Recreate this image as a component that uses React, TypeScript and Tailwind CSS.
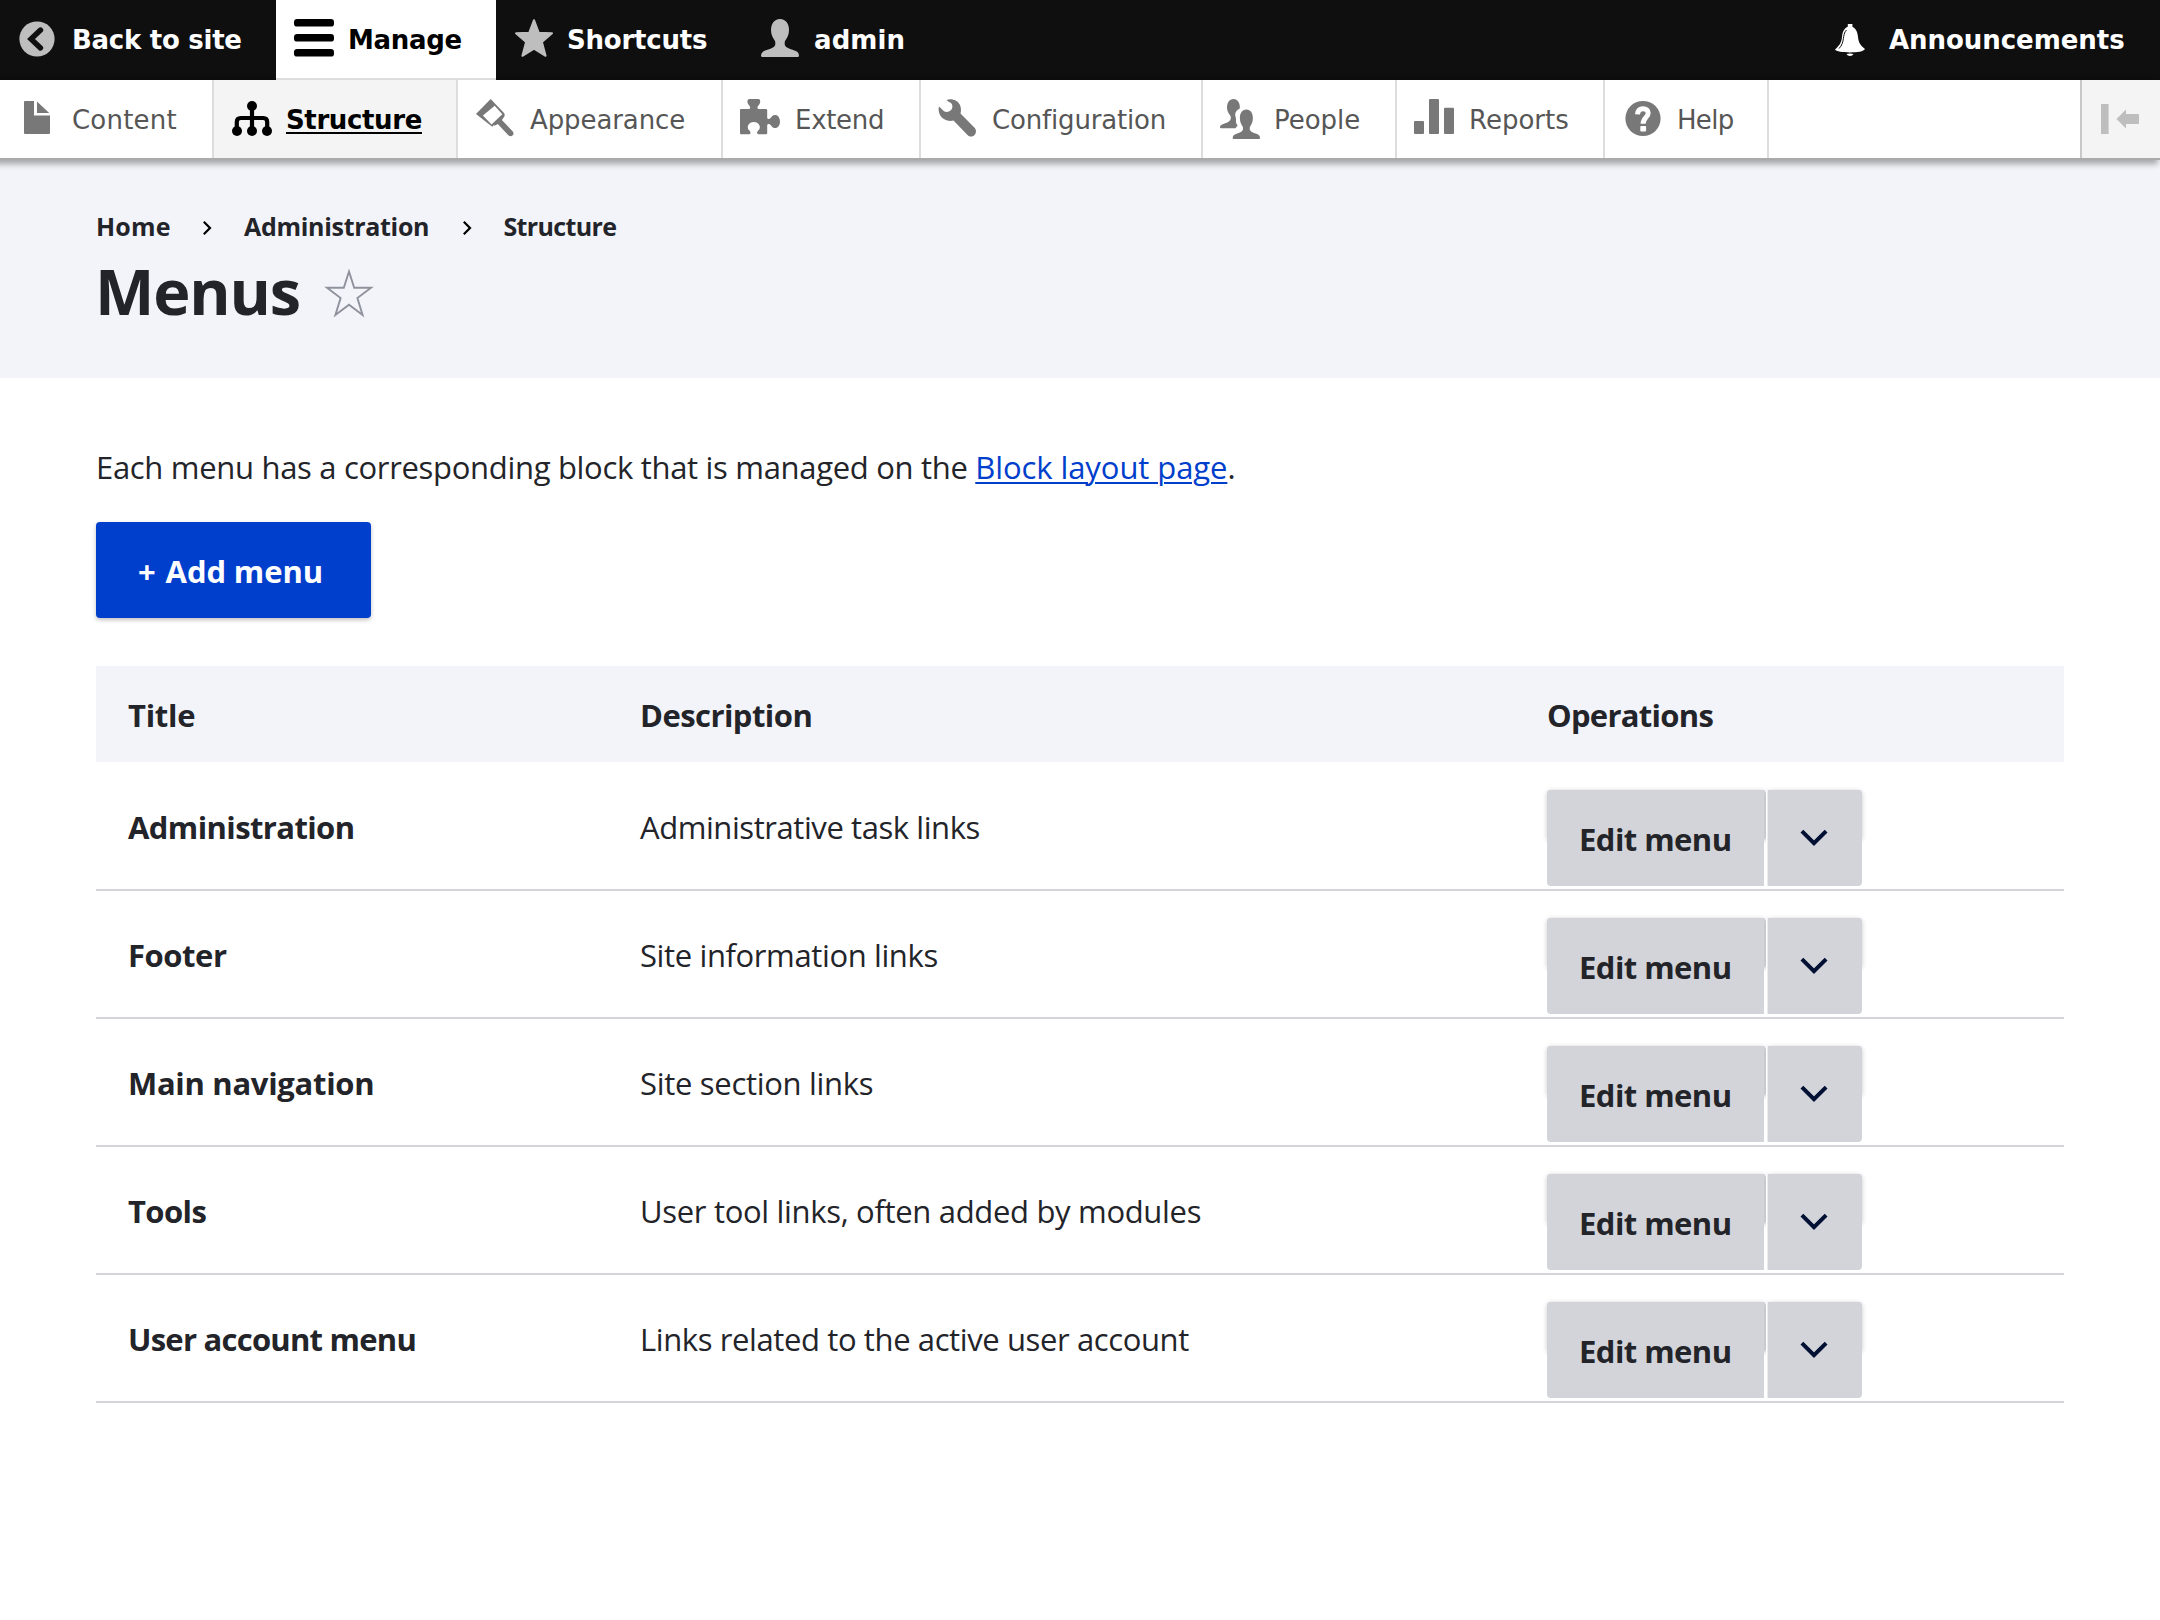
import type { ReactNode } from "react";

const PERSON =
  "M19 0C13 0 10 5 10 11C10 16 12 19 14 22C15 26 14 28 10 29.5C5 31.5 0 32 0 36.5Q0 38 1.5 38H36.5Q38 38 38 36.5C38 32 33 31.5 28 29.5C24 28 23 26 24 22C26 19 28 16 28 11C28 5 25 0 19 0Z";

function BackIcon() {
  return (
    <svg className="h-10 w-10" viewBox="0 0 40 40" fill="none">
      <circle cx="20" cy="20" r="17.6" fill="#bebebe" />
      <path d="M23.5 11L14 20L23.5 29" stroke="#0f0f0f" strokeWidth="5.4" strokeLinecap="round" strokeLinejoin="miter" />
    </svg>
  );
}

function BarsIcon() {
  return (
    <svg className="h-10 w-10" viewBox="-1 0 40 40" fill="#000">
      <rect y="0" width="40" height="7.6" rx="3.2" />
      <rect y="15" width="40" height="7.6" rx="3.2" />
      <rect y="30" width="40" height="7.6" rx="3.2" />
    </svg>
  );
}

function StarIcon() {
  return (
    <svg className="h-10 w-10" viewBox="-1 0 40 40" fill="#bebebe" stroke="#bebebe" strokeWidth="2" strokeLinejoin="round">
      <path d="M20 1.2L24.8 13.8L38 14.3L27.9 23L31.6 36.8L20 29.6L8.4 36.8L12.1 23L2 14.3L15.2 13.8Z" />
    </svg>
  );
}

function UserIcon() {
  return (
    <svg className="h-10 w-10" viewBox="-2 0 40 40" fill="#bebebe">
      <path d={PERSON} />
    </svg>
  );
}

function BellIcon() {
  return (
    <svg className="h-8 w-[30px]" viewBox="0 0 30 32" fill="#fff">
      <rect x="12.8" y="0" width="4.6" height="4" />
      <path d="M15 2.3C20 2.8 22.5 7 23 13C23.5 18 25 21 30 25C29 27.5 22 28.4 15 28.4C8 28.4 1 27.5 0 25.5C5 21 6.5 18 7 13C7.5 7 10 2.8 15 2.3Z" />
      <path d="M11.5 30Q15 29.2 18.5 30Q17.5 32 15 32Q12.5 32 11.5 30Z" />
      <path d="M11.5 6C8 9.5 8.9 15.5 7.2 19.5Q6.2 22.5 4 24.5" fill="none" stroke="#0f0f0f" strokeWidth="1" />
    </svg>
  );
}

function FileIcon() {
  return (
    <svg className="h-10 w-10" viewBox="-7 -2 40 40" fill="#787878">
      <path d="M1 0H10V14.5H26V32Q26 33 25 33H1Q0 33 0 32V1Q0 0 1 0Z" />
      <path d="M13 0.5L25.2 12H13Z" />
    </svg>
  );
}

function StructureIcon() {
  return (
    <svg className="h-10 w-10 overflow-visible" viewBox="-1 -2 40 40" fill="#000">
      <path d="M20 5V30M4.8 30V21Q4.8 17 8.8 17H31.2Q35.2 17 35.2 21V30" fill="none" stroke="#000" strokeWidth="4.2" />
      <circle cx="20" cy="5" r="5" />
      <circle cx="5" cy="30" r="5" />
      <circle cx="20" cy="30" r="5" />
      <circle cx="35" cy="30" r="5" />
    </svg>
  );
}

function BrushIcon() {
  return (
    <svg className="h-10 w-10" viewBox="-1 0 40 40" fill="#787878">
      <path
        fillRule="evenodd"
        d="M14.7 0L28 14Q29.3 16 28.2 17.8L25.9 21L36.8 32.4Q38.2 34.4 36.8 36.3Q34.8 38 32.6 36.6L21.8 25Q19.5 27 17.5 26.3L16.2 27.7L0 15ZM18.7 6.8L6.9 16.6L15.5 25.6L26.3 15.2Z"
      />
    </svg>
  );
}

function PuzzleIcon() {
  return (
    <svg className="h-10 w-10" viewBox="0 0 40 40" fill="#787878">
      <path d="M1 10H9.5C10.6 9 10.4 7.6 9 6.2C7.6 4.8 6.9 2.6 7.8 .9Q8.3 0 9.4 0H18.4Q19.4 0 19.9 .9C20.6 2.6 20 4.8 18.6 6.2C17.2 7.6 17 9 18.2 10H26Q27.2 10 27.2 11V19.3C28.4 20.6 30 20 31.2 18.2C32.4 16.4 34.2 15.6 36 16C38.4 16.6 40 19.2 40 22.4C40 25.8 38.4 28.4 36 29C34.2 29.4 32.4 28.6 31.2 26.8C30 25 28.4 24.4 27.2 25.8V34Q27.2 35.2 26 35.2H18.2C16.6 34.6 16.8 33 18 31.8C19.6 30.4 20.2 28.6 19.6 26.8C19 24.4 16.6 23 13.8 23C11 23 8.6 24.4 8 26.8C7.4 28.6 8 30.4 9.6 31.8C10.8 33 11 34.6 9.4 35.2H1Q0 35.2 0 34V11Q0 10 1 10Z" />
    </svg>
  );
}

function WrenchIcon() {
  return (
    <svg className="h-10 w-10" viewBox="-0.5 0 40 40" fill="#787878">
      <path d="M8 .9C13 -1 19 1 21.5 6C22.7 9 22.7 12 22 14.5L36.3 29C38 31 37.8 34 36 36C34 38 31 38 29 36L15 21.5C10 23 4 20.5 1.5 16C0 13 -.3 10 .5 7.5L5.5 12.3C8 13.5 11 13 13 10.5C14.5 8 14 5.5 12.5 4Q10 3 8 .9Z" />
    </svg>
  );
}

function PeopleIcon() {
  return (
    <svg className="h-10 w-10" viewBox="0 0 40 40" fill="#787878">
      <path d="M13.5 0C9.2 0 7 4 7 8.5C7 12 8.6 14.5 10.4 16.8C11.4 19.6 10.6 22 7.4 23.4C3.4 25 0 25.4 0 28.2Q0 29.3 1 29.3H15.4L17.6 26.6C16.4 25 15.8 23.8 16 21.6C16.4 19 15 17.4 15.2 15C15.6 12 17.4 10.6 19.8 9.4C20.2 4.4 17.8 0 13.5 0Z" />
      <path d={PERSON} transform="translate(12.7 10.6) scale(.72 .775)" />
    </svg>
  );
}

function ReportsIcon() {
  return (
    <svg className="h-10 w-10" viewBox="0 0 40 40" fill="#787878">
      <rect x="0" y="22" width="10" height="13" rx="1" />
      <rect x="15" y="0" width="10" height="35" rx="1" />
      <rect x="30" y="8.7" width="10" height="26.3" rx="1" />
    </svg>
  );
}

function HelpIcon() {
  return (
    <svg className="h-10 w-10" viewBox="-3.5 -2 40 40" fill="none">
      <circle cx="17.5" cy="17.5" r="17.6" fill="#787878" />
      <path d="M12 13.4C12.3 9.8 14.4 7.7 17.6 7.7C20.8 7.7 22.7 9.4 22.7 12C22.7 16.4 17.6 16.6 17.6 22.8" stroke="#fff" strokeWidth="5" />
      <rect x="14.8" y="25" width="5.8" height="5.6" rx="1" fill="#fff" />
    </svg>
  );
}

type TabProps = { icon: ReactNode; label: string; box: string; text: string };

function Tab({ icon, label, box, text }: TabProps) {
  return (
    <a className={`flex h-20 shrink-0 items-center ${box}`}>
      <span className="flex h-20 w-[72px] shrink-0 items-start pt-[19px] pl-[17px] [&>svg]:overflow-visible">{icon}</span>
      <span className={`whitespace-nowrap ${text}`}>{label}</span>
    </a>
  );
}

function TrayItem({ icon, label, box, text }: TabProps) {
  return (
    <li className={`flex h-[78px] shrink-0 items-center border-r-2 border-[#ddd] ${box}`}>
      <span className="flex h-[78px] w-[72px] shrink-0 items-start pt-[19px] pl-[17px]">{icon}</span>
      <span className={`pt-[2px] whitespace-nowrap ${text}`}>{label}</span>
    </li>
  );
}

const tray: TabProps[] = [
  { icon: <FileIcon />, label: "Content", box: "w-[214px]", text: "tracking-[0.2px]" },
  {
    icon: <StructureIcon />,
    label: "Structure",
    box: "w-[244px] bg-[#f4f4f4]",
    text: "font-bold text-black underline decoration-2 underline-offset-[3px] tracking-[-0.37px]",
  },
  { icon: <BrushIcon />, label: "Appearance", box: "w-[265px]", text: "tracking-[-0.1px]" },
  { icon: <PuzzleIcon />, label: "Extend", box: "w-[198px]", text: "tracking-[-0.3px]" },
  { icon: <WrenchIcon />, label: "Configuration", box: "w-[282px]", text: "-ml-px tracking-[-0.17px]" },
  { icon: <PeopleIcon />, label: "People", box: "w-[194px]", text: "-ml-px tracking-[-0.05px]" },
  { icon: <ReportsIcon />, label: "Reports", box: "w-[208px]", text: "" },
  { icon: <HelpIcon />, label: "Help", box: "w-[164px]", text: "tracking-[-0.7px]" },
];

const menus = [
  { title: "Administration", ts: "tracking-[-0.6px]", description: "Administrative task links", ds: "tracking-[-0.43px]" },
  { title: "Footer", ts: "tracking-[-0.45px]", description: "Site information links", ds: "tracking-[-0.38px]" },
  { title: "Main navigation", ts: "tracking-[-0.3px]", description: "Site section links", ds: "tracking-[-0.3px]" },
  { title: "Tools", ts: "tracking-[-0.6px]", description: "User tool links, often added by modules", ds: "tracking-[-0.32px]" },
  { title: "User account menu", ts: "tracking-[-0.75px]", description: "Links related to the active user account", ds: "tracking-[-0.39px]" },
];

function Crumb() {
  return (
    <svg className="mt-[3px] h-3.5 w-2.5 shrink-0" viewBox="0 0 10 14" fill="none" stroke="#000" strokeWidth="2.2">
      <path d="M1.8 .8L8 7L1.8 13.2" />
    </svg>
  );
}

function Operations() {
  return (
    <div className="relative mt-[27px] flex h-24 w-[315px] gap-1">
      <div className="absolute top-0 left-0 h-[50px] w-[219px] rounded-[4px] bg-[#d3d4d9] shadow-[0_1px_5px_rgba(0,0,0,0.22)]" />
      <div className="absolute top-0 right-0 h-[50px] w-[95px] rounded-[4px] bg-[#d3d4d9] shadow-[0_1px_5px_rgba(0,0,0,0.22)]" />
      <div className="absolute top-0 left-[219px] h-24 w-[1.5px] bg-white" />
      <div className="absolute top-0 right-[94px] h-24 w-px bg-[#ececef]" />
      <button className="relative h-24 w-[217px] rounded-l-[4px] bg-[#d3d4d9] pt-[2px] pl-8 text-left font-bold tracking-[-0.55px]">
        Edit menu
      </button>
      <button className="relative flex h-24 w-[94px] items-center justify-center rounded-r-[4px] bg-[#d3d4d9] pr-[2px]">
        <svg className="h-5 w-7" viewBox="0 0 28 20" fill="none" stroke="#000f33" strokeWidth="4">
          <path d="M1.9 3.2L14 15.2L26.1 3.2" />
        </svg>
      </button>
    </div>
  );
}

export default function App() {
  return (
    <div className="h-[1620px] w-[2160px] overflow-hidden bg-white font-['Open_Sans','Noto_Sans',sans-serif] text-[31px] leading-[48px] text-[#232429]">
      <div className="relative z-10 font-['DejaVu_Sans',sans-serif] text-[26px] leading-8">
        <nav className="flex h-20 bg-[#0f0f0f] font-bold text-white">
          <Tab icon={<BackIcon />} label="Back to site" box="w-[276px]" text="tracking-[-0.27px]" />
          <Tab icon={<BarsIcon />} label="Manage" box="w-[220px] bg-white text-black shadow-[inset_0_-2px_0_#ddd]" text="tracking-[-0.33px]" />
          <Tab icon={<StarIcon />} label="Shortcuts" box="w-[246px]" text="-ml-px tracking-[-0.22px]" />
          <Tab icon={<UserIcon />} label="admin" box="w-[200px]" text="tracking-[0.1px]" />
          <a className="ml-auto flex h-20 w-[325px] items-center">
            <BellIcon />
            <span className="ml-6 tracking-[-0.05px]">Announcements</span>
          </a>
        </nav>
        <div className="flex h-20 justify-between border-b-2 border-[#aaa] bg-white text-[#565656] shadow-[-4px_2px_6px_2px_rgba(0,0,0,0.33)]">
          <ul className="flex">
            {tray.map((item) => (
              <TrayItem key={item.label} {...item} />
            ))}
          </ul>
          <button className="flex h-[78px] w-20 items-center border-l-2 border-[#c8c8c8] bg-[#f4f4f4] pl-[19px]">
            <svg className="h-[30px] w-[38px]" viewBox="0 0 38 30" fill="#bebebe">
              <rect width="7.6" height="30" />
              <path d="M15.5 15L25 5.6V10H37Q38 10 38 11V19Q38 20 37 20H25V24.4Z" />
            </svg>
          </button>
        </div>
      </div>

      <header className="h-[218px] bg-[#f3f4f9] px-24 pt-[50px]">
        <nav className="flex h-8 items-center text-[25px] leading-8 font-bold">
          <span className="w-[106px] tracking-[0.2px]">Home</span>
          <Crumb />
          <span className="ml-8 w-[218px] tracking-[-0.3px]">Administration</span>
          <Crumb />
          <span className="ml-[31.5px] tracking-[-0.65px]">Structure</span>
        </nav>
        <div className="mt-[9px] flex h-20 items-center">
          <h1 className="w-[228px] text-[63px] leading-[80px] font-bold tracking-[-1.2px]">
            <span className="-ml-px">Menus</span>
          </h1>
          <svg className="mt-1 h-[50px] w-[50px]" viewBox="0 0 50 50" fill="none" stroke="#8e929c" strokeWidth="1.9">
            <path d="M25 3.5L30.2 19.7L47 19.8L33.4 30L38.6 47L25 36.8L11.4 47L16.6 30L3 19.8L19.8 19.7Z" />
          </svg>
        </div>
      </header>

      <main className="px-24 pt-[65px]">
        <p className="tracking-[-0.31px]">
          Each menu has a corresponding block that is managed on the{" "}
          <a className="tracking-[-0.08px] text-[#003ecc] underline decoration-2 underline-offset-[3px]">Block layout page</a>.
        </p>
        <button className="mt-[31px] block h-24 w-[275px] rounded-[4px] bg-[#003ecc] pt-[2px] pl-[42px] text-left font-bold tracking-[-0.1px] text-white shadow-[0_2px_4px_rgba(0,0,0,0.25)]">
          <span className="mr-[2px]">+</span> Add menu
        </button>

        <section className="mt-12">
          <div className="grid h-24 grid-cols-[512px_907px_1fr] items-center bg-[#f3f4f9] pt-[2px] pl-8 font-bold">
            <span className="tracking-[-0.3px]">Title</span>
            <span className="tracking-[-0.55px]">Description</span>
            <span className="tracking-[-0.72px]">Operations</span>
          </div>
          <div className="pt-px">
            {menus.map((menu) => (
              <div key={menu.title} className="grid h-32 grid-cols-[512px_907px_1fr] border-b-2 border-[#d3d4d9] pl-8">
                <span className={`pt-10 font-bold ${menu.ts}`}>{menu.title}</span>
                <span className={`pt-10 ${menu.ds}`}>{menu.description}</span>
                <Operations />
              </div>
            ))}
          </div>
        </section>
      </main>
    </div>
  );
}
